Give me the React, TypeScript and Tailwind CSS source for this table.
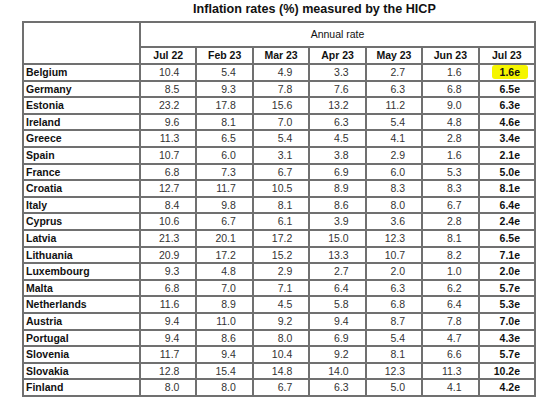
import { Fragment } from "react";

const months = ["Jul 22", "Feb 23", "Mar 23", "Apr 23", "May 23", "Jun 23", "Jul 23"];

const rows: [string, string[]][] = [
  ["Belgium", ["10.4", "5.4", "4.9", "3.3", "2.7", "1.6", "1.6e"]],
  ["Germany", ["8.5", "9.3", "7.8", "7.6", "6.3", "6.8", "6.5e"]],
  ["Estonia", ["23.2", "17.8", "15.6", "13.2", "11.2", "9.0", "6.3e"]],
  ["Ireland", ["9.6", "8.1", "7.0", "6.3", "5.4", "4.8", "4.6e"]],
  ["Greece", ["11.3", "6.5", "5.4", "4.5", "4.1", "2.8", "3.4e"]],
  ["Spain", ["10.7", "6.0", "3.1", "3.8", "2.9", "1.6", "2.1e"]],
  ["France", ["6.8", "7.3", "6.7", "6.9", "6.0", "5.3", "5.0e"]],
  ["Croatia", ["12.7", "11.7", "10.5", "8.9", "8.3", "8.3", "8.1e"]],
  ["Italy", ["8.4", "9.8", "8.1", "8.6", "8.0", "6.7", "6.4e"]],
  ["Cyprus", ["10.6", "6.7", "6.1", "3.9", "3.6", "2.8", "2.4e"]],
  ["Latvia", ["21.3", "20.1", "17.2", "15.0", "12.3", "8.1", "6.5e"]],
  ["Lithuania", ["20.9", "17.2", "15.2", "13.3", "10.7", "8.2", "7.1e"]],
  ["Luxembourg", ["9.3", "4.8", "2.9", "2.7", "2.0", "1.0", "2.0e"]],
  ["Malta", ["6.8", "7.0", "7.1", "6.4", "6.3", "6.2", "5.7e"]],
  ["Netherlands", ["11.6", "8.9", "4.5", "5.8", "6.8", "6.4", "5.3e"]],
  ["Austria", ["9.4", "11.0", "9.2", "9.4", "8.7", "7.8", "7.0e"]],
  ["Portugal", ["9.4", "8.6", "8.0", "6.9", "5.4", "4.7", "4.3e"]],
  ["Slovenia", ["11.7", "9.4", "10.4", "9.2", "8.1", "6.6", "5.7e"]],
  ["Slovakia", ["12.8", "15.4", "14.8", "14.0", "12.3", "11.3", "10.2e"]],
  ["Finland", ["8.0", "8.0", "6.7", "6.3", "5.0", "4.1", "4.2e"]],
];

export default function App() {
  return (
    <div
      className="w-[544px] h-[400px] bg-white overflow-hidden"
      style={{ fontFamily: '"Liberation Sans", Arial, sans-serif' }}
    >
      <div className="h-[21px] pl-[193px] pt-[1px] text-[12.6px] font-bold leading-[16px] text-[#111]">
        Inflation rates (%) measured by the HICP
      </div>

      <div className="ml-[22px] grid w-[514px] grid-cols-[115px_repeat(7,minmax(0,1fr))] grid-rows-[23px_15px_repeat(20,14.6px)] gap-[2px] bg-[#707070] p-[2px] text-[10.5px] leading-none">
        <div className="row-span-2 bg-white" />
        <div className="col-span-7 flex items-center justify-center bg-white text-[#111]">
          Annual rate
        </div>
        {months.map((m) => (
          <div key={m} className="flex items-center justify-center bg-white font-bold text-[#111]">
            {m}
          </div>
        ))}

        {rows.map(([country, values]) => (
          <Fragment key={country}>
            <div className="flex items-center bg-white pl-[2px] font-bold text-[#111]">
              {country}
            </div>
            {values.map((v, i) =>
              i === 6 ? (
                <div
                  key={i}
                  className="flex items-center justify-end bg-white pr-[14px] font-bold text-[#111]"
                >
                  {country === "Belgium" ? (
                    <span className="-mr-[8px] flex h-[14px] items-center rounded-[3px] bg-[#f5f500] px-[8px]">
                      {v}
                    </span>
                  ) : (
                    v
                  )}
                </div>
              ) : (
                <div
                  key={i}
                  className="flex items-center justify-end bg-white pr-[16px] text-[#333]"
                >
                  {v}
                </div>
              )
            )}
          </Fragment>
        ))}
      </div>
    </div>
  );
}
